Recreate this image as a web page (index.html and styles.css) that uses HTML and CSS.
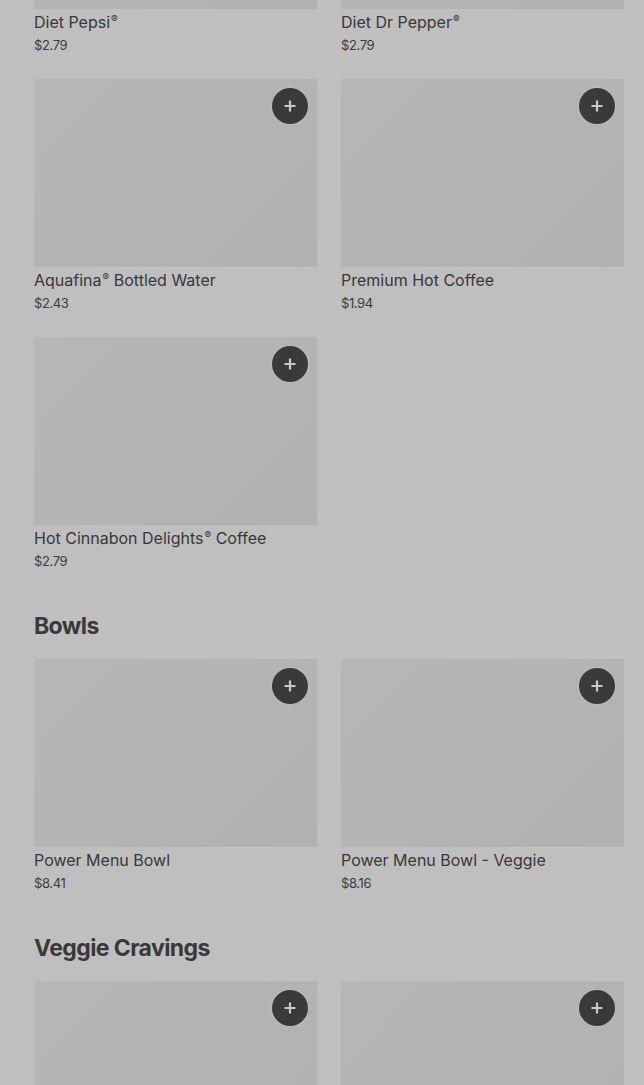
FILE: index.html
```html
<!DOCTYPE html>
<html lang="en">
<head>
<meta charset="utf-8">
<title>Menu</title>
<link rel="stylesheet" href="styles.css">
</head>
<body>
<main class="menu">
  <section class="section">
    <div class="grid">
      <div class="card">
        <div class="thumb"><button class="add" aria-label="Add"><svg viewBox="0 0 14 14" width="14" height="14"><path d="M7 1.5v11M1.5 7h11" /></svg></button></div>
        <div class="name">Diet Pepsi<span class="reg">®</span></div>
        <div class="price">$2.79</div>
      </div>
      <div class="card">
        <div class="thumb"><button class="add" aria-label="Add"><svg viewBox="0 0 14 14" width="14" height="14"><path d="M7 1.5v11M1.5 7h11" /></svg></button></div>
        <div class="name">Diet Dr Pepper<span class="reg">®</span></div>
        <div class="price">$2.79</div>
      </div>
      <div class="card">
        <div class="thumb"><button class="add" aria-label="Add"><svg viewBox="0 0 14 14" width="14" height="14"><path d="M7 1.5v11M1.5 7h11" /></svg></button></div>
        <div class="name">Aquafina<span class="reg">®</span> Bottled Water</div>
        <div class="price">$2.43</div>
      </div>
      <div class="card">
        <div class="thumb"><button class="add" aria-label="Add"><svg viewBox="0 0 14 14" width="14" height="14"><path d="M7 1.5v11M1.5 7h11" /></svg></button></div>
        <div class="name">Premium Hot Coffee</div>
        <div class="price">$1.94</div>
      </div>
      <div class="card">
        <div class="thumb"><button class="add" aria-label="Add"><svg viewBox="0 0 14 14" width="14" height="14"><path d="M7 1.5v11M1.5 7h11" /></svg></button></div>
        <div class="name">Hot Cinnabon Delights<span class="reg">®</span> Coffee</div>
        <div class="price">$2.79</div>
      </div>
    </div>
  </section>

  <section class="section">
    <h2 class="heading">Bowls</h2>
    <div class="grid">
      <div class="card">
        <div class="thumb"><button class="add" aria-label="Add"><svg viewBox="0 0 14 14" width="14" height="14"><path d="M7 1.5v11M1.5 7h11" /></svg></button></div>
        <div class="name">Power Menu Bowl</div>
        <div class="price">$8.41</div>
      </div>
      <div class="card">
        <div class="thumb"><button class="add" aria-label="Add"><svg viewBox="0 0 14 14" width="14" height="14"><path d="M7 1.5v11M1.5 7h11" /></svg></button></div>
        <div class="name">Power Menu Bowl - Veggie</div>
        <div class="price">$8.16</div>
      </div>
    </div>
  </section>

  <section class="section">
    <h2 class="heading">Veggie Cravings</h2>
    <div class="grid">
      <div class="card">
        <div class="thumb"><button class="add" aria-label="Add"><svg viewBox="0 0 14 14" width="14" height="14"><path d="M7 1.5v11M1.5 7h11" /></svg></button></div>
      </div>
      <div class="card">
        <div class="thumb"><button class="add" aria-label="Add"><svg viewBox="0 0 14 14" width="14" height="14"><path d="M7 1.5v11M1.5 7h11" /></svg></button></div>
      </div>
    </div>
  </section>
</main>
</body>
</html>
```

FILE: styles.css
```css
html, body {
  margin: 0;
  padding: 0;
  background: #bfbfbf;
  overflow: hidden;
}

body {
  font-family: Inter, Roboto, "Liberation Sans", sans-serif;
  color: #3a3a3a;
}

.menu {
  padding: 0 20px 0 34px;
  margin-top: -179px;
  display: flex;
  flex-direction: column;
  gap: 40px;
}

.section {
  display: flex;
  flex-direction: column;
  gap: 18px;
}

.heading {
  margin: 0;
  font-family: Inter, "Liberation Sans", sans-serif;
  font-size: 23px;
  line-height: 30px;
  font-weight: 700;
  letter-spacing: -0.6px;
  color: #393939;
}

.grid {
  display: grid;
  grid-template-columns: 283px 283px;
  column-gap: 24px;
  row-gap: 24px;
}

.card {
  display: flex;
  flex-direction: column;
}

.thumb {
  position: relative;
  height: 188px;
  background: linear-gradient(135deg, #b7b7b7 0%, #b4b4b4 45%, #b1b1b1 100%);
}

.add {
  position: absolute;
  top: 9px;
  right: 9px;
  width: 36px;
  height: 36px;
  padding: 0;
  border: none;
  border-radius: 50%;
  background: #3a3a3a;
  display: flex;
  align-items: center;
  justify-content: center;
  box-shadow: 0 0 0 1px rgba(255,255,255,0.12);
}

.add svg {
  display: block;
}

.add path {
  stroke: #c9c9c9;
  stroke-width: 2.2;
  stroke-linecap: butt;
  fill: none;
}

.name {
  margin-top: 2px;
  font-size: 16px;
  line-height: 22px;
  font-weight: 400;
  letter-spacing: 0;
  color: #383838;
}

.reg {
  font-size: 10px;
  vertical-align: 5px;
  line-height: 0;
  margin-left: 1px;
}

.price {
  margin-top: 2px;
  font-size: 13px;
  line-height: 20px;
  letter-spacing: -0.4px;
  color: #3d3d3d;
}
```
